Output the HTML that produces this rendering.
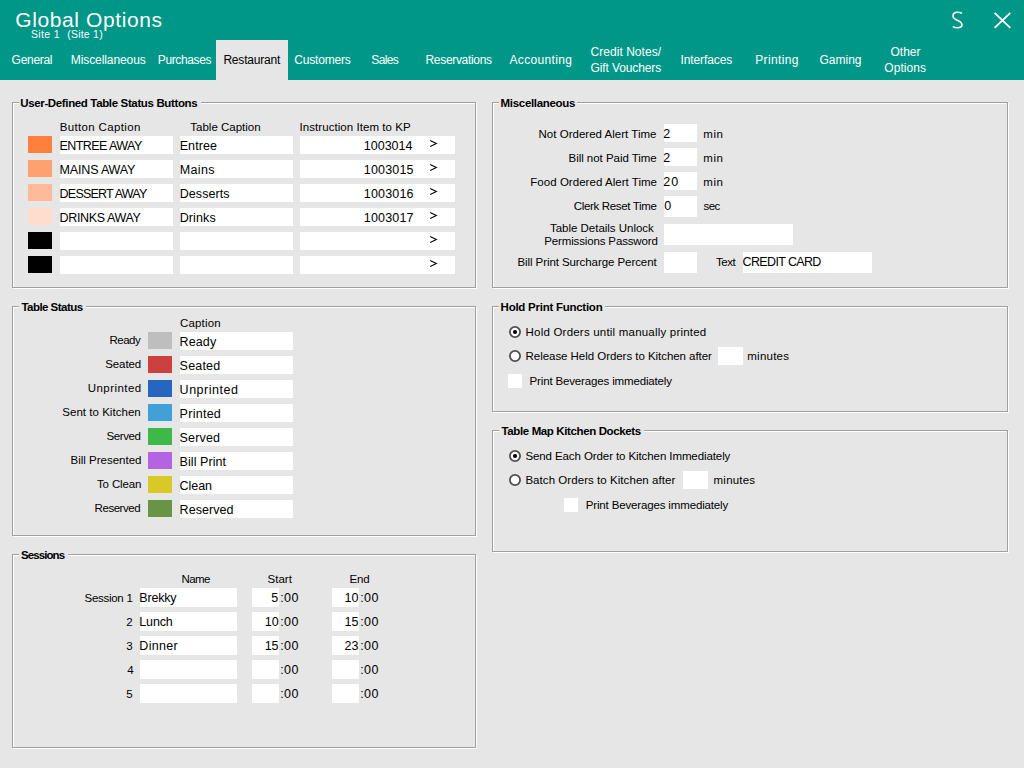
<!DOCTYPE html>
<html><head><meta charset="utf-8"><style>
html,body{margin:0;padding:0;width:1024px;height:768px;overflow:hidden;background:#e6e6e6}
.t{position:absolute;white-space:pre;line-height:16px;font-family:'Liberation Sans', sans-serif}
</style></head><body>
<div style="position:absolute;left:0;top:0;width:1024px;height:80px;background:#009688"></div>
<div style="position:absolute;left:216px;top:40px;width:72px;height:40px;background:#e6e6e6"></div>
<div style="position:absolute;left:13px;top:103px;width:462px;height:184px;border:1px solid #fff"></div>
<div style="position:absolute;left:12px;top:102px;width:462px;height:184px;border:1px solid #a0a0a0"></div>
<div style="position:absolute;left:19px;top:101px;width:182px;height:4px;background:#e6e6e6"></div>
<div style="position:absolute;left:13px;top:307px;width:462px;height:228px;border:1px solid #fff"></div>
<div style="position:absolute;left:12px;top:306px;width:462px;height:228px;border:1px solid #a0a0a0"></div>
<div style="position:absolute;left:19px;top:305px;width:67px;height:4px;background:#e6e6e6"></div>
<div style="position:absolute;left:13px;top:555px;width:462px;height:192px;border:1px solid #fff"></div>
<div style="position:absolute;left:12px;top:554px;width:462px;height:192px;border:1px solid #a0a0a0"></div>
<div style="position:absolute;left:19px;top:553px;width:49px;height:4px;background:#e6e6e6"></div>
<div style="position:absolute;left:493px;top:103px;width:514px;height:184px;border:1px solid #fff"></div>
<div style="position:absolute;left:492px;top:102px;width:514px;height:184px;border:1px solid #a0a0a0"></div>
<div style="position:absolute;left:499px;top:101px;width:78px;height:4px;background:#e6e6e6"></div>
<div style="position:absolute;left:493px;top:307px;width:514px;height:104px;border:1px solid #fff"></div>
<div style="position:absolute;left:492px;top:306px;width:514px;height:104px;border:1px solid #a0a0a0"></div>
<div style="position:absolute;left:499px;top:305px;width:106px;height:4px;background:#e6e6e6"></div>
<div style="position:absolute;left:493px;top:431px;width:514px;height:120px;border:1px solid #fff"></div>
<div style="position:absolute;left:492px;top:430px;width:514px;height:120px;border:1px solid #a0a0a0"></div>
<div style="position:absolute;left:499px;top:429px;width:145px;height:4px;background:#e6e6e6"></div>
<div style="position:absolute;left:60px;top:136px;width:113px;height:18px;background:#ffffff"></div>
<div style="position:absolute;left:180px;top:136px;width:113px;height:18px;background:#ffffff"></div>
<div style="position:absolute;left:300px;top:136px;width:155px;height:18px;background:#ffffff"></div>
<div style="position:absolute;left:60px;top:160px;width:113px;height:18px;background:#ffffff"></div>
<div style="position:absolute;left:180px;top:160px;width:113px;height:18px;background:#ffffff"></div>
<div style="position:absolute;left:300px;top:160px;width:155px;height:18px;background:#ffffff"></div>
<div style="position:absolute;left:60px;top:184px;width:113px;height:18px;background:#ffffff"></div>
<div style="position:absolute;left:180px;top:184px;width:113px;height:18px;background:#ffffff"></div>
<div style="position:absolute;left:300px;top:184px;width:155px;height:18px;background:#ffffff"></div>
<div style="position:absolute;left:60px;top:208px;width:113px;height:18px;background:#ffffff"></div>
<div style="position:absolute;left:180px;top:208px;width:113px;height:18px;background:#ffffff"></div>
<div style="position:absolute;left:300px;top:208px;width:155px;height:18px;background:#ffffff"></div>
<div style="position:absolute;left:60px;top:232px;width:113px;height:18px;background:#ffffff"></div>
<div style="position:absolute;left:180px;top:232px;width:113px;height:18px;background:#ffffff"></div>
<div style="position:absolute;left:300px;top:232px;width:155px;height:18px;background:#ffffff"></div>
<div style="position:absolute;left:60px;top:256px;width:113px;height:18px;background:#ffffff"></div>
<div style="position:absolute;left:180px;top:256px;width:113px;height:18px;background:#ffffff"></div>
<div style="position:absolute;left:300px;top:256px;width:155px;height:18px;background:#ffffff"></div>
<div style="position:absolute;left:28px;top:136px;width:24px;height:17px;background:#ff7f3f"></div>
<div style="position:absolute;left:28px;top:160px;width:24px;height:17px;background:#ffa070"></div>
<div style="position:absolute;left:28px;top:184px;width:24px;height:17px;background:#ffbb99"></div>
<div style="position:absolute;left:28px;top:208px;width:24px;height:17px;background:#ffddcc"></div>
<div style="position:absolute;left:28px;top:232px;width:24px;height:17px;background:#000000"></div>
<div style="position:absolute;left:28px;top:256px;width:24px;height:17px;background:#000000"></div>
<div style="position:absolute;left:148px;top:332px;width:24px;height:17px;background:#bebebe"></div>
<div style="position:absolute;left:180px;top:332px;width:113px;height:18px;background:#ffffff"></div>
<div style="position:absolute;left:148px;top:356px;width:24px;height:17px;background:#cc4040"></div>
<div style="position:absolute;left:180px;top:356px;width:113px;height:18px;background:#ffffff"></div>
<div style="position:absolute;left:148px;top:380px;width:24px;height:17px;background:#2666c0"></div>
<div style="position:absolute;left:180px;top:380px;width:113px;height:18px;background:#ffffff"></div>
<div style="position:absolute;left:148px;top:404px;width:24px;height:17px;background:#40a0d8"></div>
<div style="position:absolute;left:180px;top:404px;width:113px;height:18px;background:#ffffff"></div>
<div style="position:absolute;left:148px;top:428px;width:24px;height:17px;background:#40b848"></div>
<div style="position:absolute;left:180px;top:428px;width:113px;height:18px;background:#ffffff"></div>
<div style="position:absolute;left:148px;top:452px;width:24px;height:17px;background:#b464e0"></div>
<div style="position:absolute;left:180px;top:452px;width:113px;height:18px;background:#ffffff"></div>
<div style="position:absolute;left:148px;top:476px;width:24px;height:17px;background:#d8c828"></div>
<div style="position:absolute;left:180px;top:476px;width:113px;height:18px;background:#ffffff"></div>
<div style="position:absolute;left:148px;top:500px;width:24px;height:17px;background:#689448"></div>
<div style="position:absolute;left:180px;top:500px;width:113px;height:18px;background:#ffffff"></div>
<div style="position:absolute;left:140px;top:588px;width:97px;height:19px;background:#ffffff"></div>
<div style="position:absolute;left:252px;top:588px;width:27px;height:19px;background:#ffffff"></div>
<div style="position:absolute;left:332px;top:588px;width:27px;height:19px;background:#ffffff"></div>
<div style="position:absolute;left:140px;top:612px;width:97px;height:19px;background:#ffffff"></div>
<div style="position:absolute;left:252px;top:612px;width:27px;height:19px;background:#ffffff"></div>
<div style="position:absolute;left:332px;top:612px;width:27px;height:19px;background:#ffffff"></div>
<div style="position:absolute;left:140px;top:636px;width:97px;height:19px;background:#ffffff"></div>
<div style="position:absolute;left:252px;top:636px;width:27px;height:19px;background:#ffffff"></div>
<div style="position:absolute;left:332px;top:636px;width:27px;height:19px;background:#ffffff"></div>
<div style="position:absolute;left:140px;top:660px;width:97px;height:19px;background:#ffffff"></div>
<div style="position:absolute;left:252px;top:660px;width:27px;height:19px;background:#ffffff"></div>
<div style="position:absolute;left:332px;top:660px;width:27px;height:19px;background:#ffffff"></div>
<div style="position:absolute;left:140px;top:684px;width:97px;height:19px;background:#ffffff"></div>
<div style="position:absolute;left:252px;top:684px;width:27px;height:19px;background:#ffffff"></div>
<div style="position:absolute;left:332px;top:684px;width:27px;height:19px;background:#ffffff"></div>
<div style="position:absolute;left:664px;top:124px;width:33px;height:18px;background:#ffffff"></div>
<div style="position:absolute;left:664px;top:148px;width:33px;height:18px;background:#ffffff"></div>
<div style="position:absolute;left:664px;top:172px;width:33px;height:18px;background:#ffffff"></div>
<div style="position:absolute;left:664px;top:196px;width:33px;height:21px;background:#ffffff"></div>
<div style="position:absolute;left:664px;top:224px;width:129px;height:21px;background:#ffffff"></div>
<div style="position:absolute;left:664px;top:252px;width:33px;height:21px;background:#ffffff"></div>
<div style="position:absolute;left:743px;top:252px;width:129px;height:21px;background:#ffffff"></div>
<div style="position:absolute;left:718px;top:347px;width:25px;height:18px;background:#ffffff"></div>
<div style="position:absolute;left:508px;top:374px;width:14px;height:14px;background:#ffffff"></div>
<div style="position:absolute;left:683px;top:471px;width:25px;height:18px;background:#ffffff"></div>
<div style="position:absolute;left:564px;top:498px;width:14px;height:14px;background:#ffffff"></div>
<svg style="position:absolute;left:509px;top:326px" width="12" height="12" viewBox="0 0 12 12"><circle cx="6" cy="6" r="5.1" fill="#fff" stroke="#4e4e4e" stroke-width="1.8"/><circle cx="6" cy="6" r="2.1" fill="#000"/></svg>
<svg style="position:absolute;left:509px;top:350px" width="12" height="12" viewBox="0 0 12 12"><circle cx="6" cy="6" r="5.1" fill="#fff" stroke="#4e4e4e" stroke-width="1.8"/></svg>
<svg style="position:absolute;left:509px;top:450px" width="12" height="12" viewBox="0 0 12 12"><circle cx="6" cy="6" r="5.1" fill="#fff" stroke="#4e4e4e" stroke-width="1.8"/><circle cx="6" cy="6" r="2.1" fill="#000"/></svg>
<svg style="position:absolute;left:509px;top:474px" width="12" height="12" viewBox="0 0 12 12"><circle cx="6" cy="6" r="5.1" fill="#fff" stroke="#4e4e4e" stroke-width="1.8"/></svg>
<svg style="position:absolute;left:429px;top:140px" width="9" height="8" viewBox="0 0 9 8"><path d="M1.2 0.5 L7.4 3.5 L1.2 6.5" fill="none" stroke="#000" stroke-width="1.05"/></svg>
<svg style="position:absolute;left:429px;top:164px" width="9" height="8" viewBox="0 0 9 8"><path d="M1.2 0.5 L7.4 3.5 L1.2 6.5" fill="none" stroke="#000" stroke-width="1.05"/></svg>
<svg style="position:absolute;left:429px;top:188px" width="9" height="8" viewBox="0 0 9 8"><path d="M1.2 0.5 L7.4 3.5 L1.2 6.5" fill="none" stroke="#000" stroke-width="1.05"/></svg>
<svg style="position:absolute;left:429px;top:212px" width="9" height="8" viewBox="0 0 9 8"><path d="M1.2 0.5 L7.4 3.5 L1.2 6.5" fill="none" stroke="#000" stroke-width="1.05"/></svg>
<svg style="position:absolute;left:429px;top:236px" width="9" height="8" viewBox="0 0 9 8"><path d="M1.2 0.5 L7.4 3.5 L1.2 6.5" fill="none" stroke="#000" stroke-width="1.05"/></svg>
<svg style="position:absolute;left:429px;top:260px" width="9" height="8" viewBox="0 0 9 8"><path d="M1.2 0.5 L7.4 3.5 L1.2 6.5" fill="none" stroke="#000" stroke-width="1.05"/></svg>
<svg style="position:absolute;left:940px;top:0px" width="84" height="40" viewBox="940 0 84 40"><path d="M962 13.4 C960.6 12.6 959.2 12.3 957.6 12.3 C954.8 12.3 953 13.9 953 16.1 C953 18.4 954.9 19.4 957.6 20.6 C960.6 21.9 962 23.1 962 25.1 C962 26.9 960.2 27.7 957.6 27.7 C955.6 27.7 954 27.3 952.8 26.6" fill="none" stroke="#fff" stroke-width="1.6"/><path d="M994.6 12.9 L1010.3 27.8 M1010.3 12.9 L994.6 27.8" fill="none" stroke="#fff" stroke-width="1.8"/></svg>
<div class="t" style="left:15.25px;top:12px;font-size:21px;font-weight:400;letter-spacing:0.608px;color:#ffffff">Global Options</div>
<div class="t" style="left:30.90px;top:26px;font-size:10.5px;font-weight:400;letter-spacing:0.360px;color:#ffffff">Site 1</div>
<div class="t" style="left:67.20px;top:26px;font-size:10.5px;font-weight:400;letter-spacing:0.229px;color:#ffffff">(Site 1)</div>
<div class="t" style="left:11.60px;top:52px;font-size:12px;font-weight:400;letter-spacing:-0.300px;color:#ffffff">General</div>
<div class="t" style="left:70.75px;top:52px;font-size:12px;font-weight:400;letter-spacing:-0.083px;color:#ffffff">Miscellaneous</div>
<div class="t" style="left:157.75px;top:52px;font-size:12px;font-weight:400;letter-spacing:-0.375px;color:#ffffff">Purchases</div>
<div class="t" style="left:294.25px;top:52px;font-size:12px;font-weight:400;letter-spacing:-0.188px;color:#ffffff">Customers</div>
<div class="t" style="left:371.25px;top:52px;font-size:12px;font-weight:400;letter-spacing:-0.625px;color:#ffffff">Sales</div>
<div class="t" style="left:425.50px;top:52px;font-size:12px;font-weight:400;letter-spacing:-0.318px;color:#ffffff">Reservations</div>
<div class="t" style="left:509.45px;top:52px;font-size:12px;font-weight:400;letter-spacing:0.344px;color:#ffffff">Accounting</div>
<div class="t" style="left:680.50px;top:52px;font-size:12px;font-weight:400;letter-spacing:-0.111px;color:#ffffff">Interfaces</div>
<div class="t" style="left:755.25px;top:52px;font-size:12px;font-weight:400;letter-spacing:0.357px;color:#ffffff">Printing</div>
<div class="t" style="left:819.50px;top:52px;font-size:12px;font-weight:400;letter-spacing:0.000px;color:#ffffff">Gaming</div>
<div class="t" style="left:223.40px;top:52px;font-size:12px;font-weight:400;letter-spacing:-0.200px;color:#000000">Restaurant</div>
<div class="t" style="left:590.60px;top:44px;font-size:12px;font-weight:400;letter-spacing:0.033px;color:#ffffff">Credit Notes/</div>
<div class="t" style="left:590.60px;top:60px;font-size:12px;font-weight:400;letter-spacing:-0.117px;color:#ffffff">Gift Vouchers</div>
<div class="t" style="left:890.50px;top:44px;font-size:12px;font-weight:400;letter-spacing:0.000px;color:#ffffff">Other</div>
<div class="t" style="left:884.25px;top:60px;font-size:12px;font-weight:400;letter-spacing:0.083px;color:#ffffff">Options</div>
<div class="t" style="left:20.25px;top:95px;font-size:11.5px;font-weight:700;letter-spacing:-0.359px;color:#000000">User-Defined Table Status Buttons</div>
<div class="t" style="left:21.40px;top:299px;font-size:11.5px;font-weight:700;letter-spacing:-0.527px;color:#000000">Table Status</div>
<div class="t" style="left:21.00px;top:547px;font-size:11.5px;font-weight:700;letter-spacing:-0.914px;color:#000000">Sessions</div>
<div class="t" style="left:500.60px;top:95px;font-size:11.5px;font-weight:700;letter-spacing:-0.317px;color:#000000">Miscellaneous</div>
<div class="t" style="left:500.60px;top:299px;font-size:11.5px;font-weight:700;letter-spacing:-0.256px;color:#000000">Hold Print Function</div>
<div class="t" style="left:501.50px;top:423px;font-size:11.5px;font-weight:700;letter-spacing:-0.375px;color:#000000">Table Map Kitchen Dockets</div>
<div class="t" style="left:59.75px;top:119px;font-size:11.5px;font-weight:400;letter-spacing:0.346px;color:#000000">Button Caption</div>
<div class="t" style="left:190.30px;top:119px;font-size:11.5px;font-weight:400;letter-spacing:0.000px;color:#000000">Table Caption</div>
<div class="t" style="left:299.60px;top:119px;font-size:11.5px;font-weight:400;letter-spacing:0.057px;color:#000000">Instruction Item to KP</div>
<div class="t" style="left:59.60px;top:138px;font-size:12.5px;font-weight:400;letter-spacing:-0.580px;color:#000000">ENTREE AWAY</div>
<div class="t" style="left:179.70px;top:138px;font-size:12.5px;font-weight:400;letter-spacing:0.080px;color:#000000">Entree</div>
<div class="t" style="left:363.80px;top:138px;font-size:12.5px;font-weight:400;letter-spacing:0.000px;color:#000000">1003014</div>
<div class="t" style="left:59.60px;top:162px;font-size:12.5px;font-weight:400;letter-spacing:-0.178px;color:#000000">MAINS AWAY</div>
<div class="t" style="left:179.70px;top:162px;font-size:12.5px;font-weight:400;letter-spacing:0.350px;color:#000000">Mains</div>
<div class="t" style="left:363.80px;top:162px;font-size:12.5px;font-weight:400;letter-spacing:0.167px;color:#000000">1003015</div>
<div class="t" style="left:59.60px;top:186px;font-size:12.5px;font-weight:400;letter-spacing:-0.782px;color:#000000">DESSERT AWAY</div>
<div class="t" style="left:179.70px;top:186px;font-size:12.5px;font-weight:400;letter-spacing:0.086px;color:#000000">Desserts</div>
<div class="t" style="left:363.80px;top:186px;font-size:12.5px;font-weight:400;letter-spacing:0.167px;color:#000000">1003016</div>
<div class="t" style="left:59.60px;top:210px;font-size:12.5px;font-weight:400;letter-spacing:-0.360px;color:#000000">DRINKS AWAY</div>
<div class="t" style="left:179.70px;top:210px;font-size:12.5px;font-weight:400;letter-spacing:0.120px;color:#000000">Drinks</div>
<div class="t" style="left:363.80px;top:210px;font-size:12.5px;font-weight:400;letter-spacing:0.167px;color:#000000">1003017</div>
<div class="t" style="left:180.00px;top:315px;font-size:11.5px;font-weight:400;letter-spacing:0.167px;color:#000000">Caption</div>
<div class="t" style="left:109.50px;top:332px;font-size:11.5px;font-weight:400;letter-spacing:-0.500px;color:#000000">Ready</div>
<div class="t" style="left:179.60px;top:334px;font-size:12.5px;font-weight:400;letter-spacing:0.100px;color:#000000">Ready</div>
<div class="t" style="left:105.25px;top:356px;font-size:11.5px;font-weight:400;letter-spacing:-0.100px;color:#000000">Seated</div>
<div class="t" style="left:179.60px;top:358px;font-size:12.5px;font-weight:400;letter-spacing:0.200px;color:#000000">Seated</div>
<div class="t" style="left:87.75px;top:380px;font-size:11.5px;font-weight:400;letter-spacing:0.438px;color:#000000">Unprinted</div>
<div class="t" style="left:179.60px;top:382px;font-size:12.5px;font-weight:400;letter-spacing:0.525px;color:#000000">Unprinted</div>
<div class="t" style="left:62.30px;top:404px;font-size:11.5px;font-weight:400;letter-spacing:0.029px;color:#000000">Sent to Kitchen</div>
<div class="t" style="left:179.60px;top:406px;font-size:12.5px;font-weight:400;letter-spacing:0.267px;color:#000000">Printed</div>
<div class="t" style="left:106.50px;top:428px;font-size:11.5px;font-weight:400;letter-spacing:-0.400px;color:#000000">Served</div>
<div class="t" style="left:179.60px;top:430px;font-size:12.5px;font-weight:400;letter-spacing:0.160px;color:#000000">Served</div>
<div class="t" style="left:70.50px;top:452px;font-size:11.5px;font-weight:400;letter-spacing:0.000px;color:#000000">Bill Presented</div>
<div class="t" style="left:179.60px;top:454px;font-size:12.5px;font-weight:400;letter-spacing:0.067px;color:#000000">Bill Print</div>
<div class="t" style="left:96.90px;top:476px;font-size:11.5px;font-weight:400;letter-spacing:-0.114px;color:#000000">To Clean</div>
<div class="t" style="left:179.60px;top:478px;font-size:12.5px;font-weight:400;letter-spacing:-0.050px;color:#000000">Clean</div>
<div class="t" style="left:94.60px;top:500px;font-size:11.5px;font-weight:400;letter-spacing:-0.457px;color:#000000">Reserved</div>
<div class="t" style="left:179.60px;top:502px;font-size:12.5px;font-weight:400;letter-spacing:0.057px;color:#000000">Reserved</div>
<div class="t" style="left:181.50px;top:571px;font-size:11.5px;font-weight:400;letter-spacing:-0.600px;color:#000000">Name</div>
<div class="t" style="left:267.60px;top:571px;font-size:11.5px;font-weight:400;letter-spacing:0.000px;color:#000000">Start</div>
<div class="t" style="left:349.60px;top:571px;font-size:11.5px;font-weight:400;letter-spacing:-0.200px;color:#000000">End</div>
<div class="t" style="left:84.50px;top:590px;font-size:11.5px;font-weight:400;letter-spacing:-0.275px;color:#000000">Session 1</div>
<div class="t" style="left:126.20px;top:614px;font-size:11.5px;font-weight:400;letter-spacing:0.000px;color:#000000">2</div>
<div class="t" style="left:126.20px;top:638px;font-size:11.5px;font-weight:400;letter-spacing:0.000px;color:#000000">3</div>
<div class="t" style="left:127.20px;top:662px;font-size:11.5px;font-weight:400;letter-spacing:0.000px;color:#000000">4</div>
<div class="t" style="left:126.20px;top:686px;font-size:11.5px;font-weight:400;letter-spacing:0.000px;color:#000000">5</div>
<div class="t" style="left:139.30px;top:590px;font-size:12.5px;font-weight:400;letter-spacing:-0.200px;color:#000000">Brekky</div>
<div class="t" style="left:139.30px;top:614px;font-size:12.5px;font-weight:400;letter-spacing:-0.150px;color:#000000">Lunch</div>
<div class="t" style="left:139.30px;top:638px;font-size:12.5px;font-weight:400;letter-spacing:0.320px;color:#000000">Dinner</div>
<div class="t" style="left:271.30px;top:590px;font-size:12.5px;font-weight:400;letter-spacing:0.000px;color:#000000">5</div>
<div class="t" style="left:344.50px;top:590px;font-size:12.5px;font-weight:400;letter-spacing:0.000px;color:#000000">10</div>
<div class="t" style="left:264.80px;top:614px;font-size:12.5px;font-weight:400;letter-spacing:0.000px;color:#000000">10</div>
<div class="t" style="left:344.50px;top:614px;font-size:12.5px;font-weight:400;letter-spacing:0.000px;color:#000000">15</div>
<div class="t" style="left:264.80px;top:638px;font-size:12.5px;font-weight:400;letter-spacing:-0.200px;color:#000000">15</div>
<div class="t" style="left:344.50px;top:638px;font-size:12.5px;font-weight:400;letter-spacing:0.000px;color:#000000">23</div>
<div class="t" style="left:280.20px;top:590px;font-size:12.5px;font-weight:400;letter-spacing:0.400px;color:#000000">:00</div>
<div class="t" style="left:360.20px;top:590px;font-size:12.5px;font-weight:400;letter-spacing:0.400px;color:#000000">:00</div>
<div class="t" style="left:280.20px;top:614px;font-size:12.5px;font-weight:400;letter-spacing:0.400px;color:#000000">:00</div>
<div class="t" style="left:360.20px;top:614px;font-size:12.5px;font-weight:400;letter-spacing:0.400px;color:#000000">:00</div>
<div class="t" style="left:280.20px;top:638px;font-size:12.5px;font-weight:400;letter-spacing:0.400px;color:#000000">:00</div>
<div class="t" style="left:360.20px;top:638px;font-size:12.5px;font-weight:400;letter-spacing:0.400px;color:#000000">:00</div>
<div class="t" style="left:280.20px;top:662px;font-size:12.5px;font-weight:400;letter-spacing:0.400px;color:#000000">:00</div>
<div class="t" style="left:360.20px;top:662px;font-size:12.5px;font-weight:400;letter-spacing:0.400px;color:#000000">:00</div>
<div class="t" style="left:280.20px;top:686px;font-size:12.5px;font-weight:400;letter-spacing:0.400px;color:#000000">:00</div>
<div class="t" style="left:360.20px;top:686px;font-size:12.5px;font-weight:400;letter-spacing:0.400px;color:#000000">:00</div>
<div class="t" style="left:538.50px;top:126px;font-size:11.5px;font-weight:400;letter-spacing:0.019px;color:#000000">Not Ordered Alert Time</div>
<div class="t" style="left:568.50px;top:150px;font-size:11.5px;font-weight:400;letter-spacing:-0.035px;color:#000000">Bill not Paid Time</div>
<div class="t" style="left:530.30px;top:174px;font-size:11.5px;font-weight:400;letter-spacing:0.036px;color:#000000">Food Ordered Alert Time</div>
<div class="t" style="left:573.70px;top:198px;font-size:11.5px;font-weight:400;letter-spacing:-0.333px;color:#000000">Clerk Reset Time</div>
<div class="t" style="left:663.20px;top:126px;font-size:12.5px;font-weight:400;letter-spacing:0.000px;color:#000000">2</div>
<div class="t" style="left:663.20px;top:150px;font-size:12.5px;font-weight:400;letter-spacing:0.000px;color:#000000">2</div>
<div class="t" style="left:663.20px;top:174px;font-size:12.5px;font-weight:400;letter-spacing:1.200px;color:#000000">20</div>
<div class="t" style="left:664.20px;top:198px;font-size:12.5px;font-weight:400;letter-spacing:0.000px;color:#000000">0</div>
<div class="t" style="left:703.30px;top:126px;font-size:11.5px;font-weight:400;letter-spacing:0.500px;color:#000000">min</div>
<div class="t" style="left:703.30px;top:150px;font-size:11.5px;font-weight:400;letter-spacing:0.500px;color:#000000">min</div>
<div class="t" style="left:703.30px;top:174px;font-size:11.5px;font-weight:400;letter-spacing:0.500px;color:#000000">min</div>
<div class="t" style="left:703.50px;top:198px;font-size:11.5px;font-weight:400;letter-spacing:-0.600px;color:#000000">sec</div>
<div class="t" style="left:550.00px;top:220px;font-size:11.5px;font-weight:400;letter-spacing:-0.021px;color:#000000">Table Details Unlock</div>
<div class="t" style="left:544.30px;top:233px;font-size:11.5px;font-weight:400;letter-spacing:-0.147px;color:#000000">Permissions Password</div>
<div class="t" style="left:517.40px;top:254px;font-size:11.5px;font-weight:400;letter-spacing:-0.074px;color:#000000">Bill Print Surcharge Percent</div>
<div class="t" style="left:715.90px;top:254px;font-size:11.5px;font-weight:400;letter-spacing:-0.400px;color:#000000">Text</div>
<div class="t" style="left:742.60px;top:254px;font-size:12.5px;font-weight:400;letter-spacing:-0.640px;color:#000000">CREDIT CARD</div>
<div class="t" style="left:525.60px;top:324px;font-size:11.5px;font-weight:400;letter-spacing:0.206px;color:#000000">Hold Orders until manually printed</div>
<div class="t" style="left:525.60px;top:348px;font-size:11.5px;font-weight:400;letter-spacing:-0.046px;color:#000000">Release Held Orders to Kitchen after</div>
<div class="t" style="left:747.30px;top:348px;font-size:11.5px;font-weight:400;letter-spacing:0.233px;color:#000000">minutes</div>
<div class="t" style="left:529.60px;top:373px;font-size:11.5px;font-weight:400;letter-spacing:-0.154px;color:#000000">Print Beverages immediately</div>
<div class="t" style="left:525.40px;top:448px;font-size:11.5px;font-weight:400;letter-spacing:-0.092px;color:#000000">Send Each Order to Kitchen Immediately</div>
<div class="t" style="left:525.40px;top:472px;font-size:11.5px;font-weight:400;letter-spacing:0.057px;color:#000000">Batch Orders to Kitchen after</div>
<div class="t" style="left:713.60px;top:472px;font-size:11.5px;font-weight:400;letter-spacing:0.200px;color:#000000">minutes</div>
<div class="t" style="left:585.70px;top:497px;font-size:11.5px;font-weight:400;letter-spacing:-0.146px;color:#000000">Print Beverages immediately</div>
</body></html>
